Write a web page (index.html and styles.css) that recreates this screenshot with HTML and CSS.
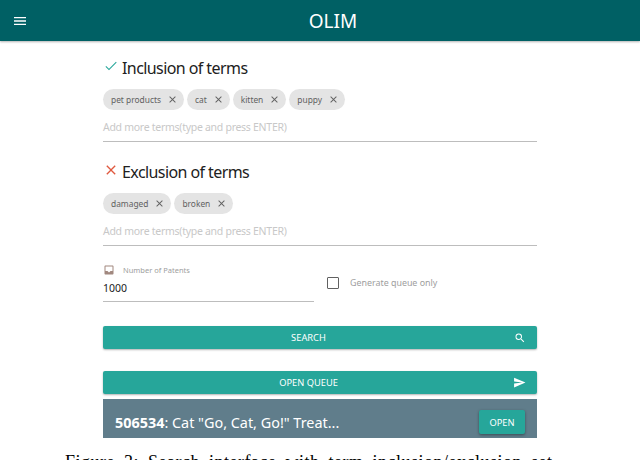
FILE: index.html
```html
<!DOCTYPE html>
<html lang="en">
<head>
<meta charset="utf-8">
<title>OLIM</title>
<link rel="stylesheet" href="styles.css">
</head>
<body>
<header class="appbar">
  <svg class="menu" viewBox="0 0 24 24"><path d="M3 18h18v-2H3v2zm0-5h18v-2H3v2zm0-7v2h18V6H3z"/></svg>
  <h1 class="brand">OLIM</h1>
</header>
<main class="content">
  <section class="terms">
    <h2 class="heading"><svg class="h-icon check" viewBox="0 0 24 24"><path d="M9 16.2 4.8 12l-1.1 1.1L9 18.4 20.5 6.9l-1.1-1.1z"/></svg>Inclusion of terms</h2>
    <div class="chips">
      <span class="chip">pet products<svg viewBox="0 0 24 24"><path d="M19 6.4 17.6 5 12 10.6 6.400 5 5 6.400 10.600 12 5 17.600 6.400 19 12 13.400 17.600 19 19 17.600 13.400 12z"/></svg></span>
      <span class="chip">cat<svg viewBox="0 0 24 24"><path d="M19 6.4 17.6 5 12 10.6 6.400 5 5 6.400 10.600 12 5 17.600 6.400 19 12 13.400 17.600 19 19 17.600 13.400 12z"/></svg></span>
      <span class="chip">kitten<svg viewBox="0 0 24 24"><path d="M19 6.4 17.6 5 12 10.6 6.400 5 5 6.400 10.600 12 5 17.600 6.400 19 12 13.400 17.600 19 19 17.600 13.400 12z"/></svg></span>
      <span class="chip">puppy<svg viewBox="0 0 24 24"><path d="M19 6.4 17.6 5 12 10.6 6.400 5 5 6.400 10.600 12 5 17.600 6.400 19 12 13.400 17.600 19 19 17.600 13.400 12z"/></svg></span>
    </div>
    <div class="add">Add more terms(type and press ENTER)</div>
  </section>
  <section class="terms">
    <h2 class="heading"><svg class="h-icon cross" viewBox="0 0 24 24"><path d="M19 6.400 17.600 5 12 10.600 6.400 5 5 6.400 10.600 12 5 17.600 6.400 19 12 13.400 17.600 19 19 17.600 13.400 12z"/></svg>Exclusion of terms</h2>
    <div class="chips">
      <span class="chip">damaged<svg viewBox="0 0 24 24"><path d="M19 6.4 17.6 5 12 10.6 6.400 5 5 6.400 10.600 12 5 17.600 6.400 19 12 13.400 17.600 19 19 17.600 13.400 12z"/></svg></span>
      <span class="chip">broken<svg viewBox="0 0 24 24"><path d="M19 6.4 17.6 5 12 10.6 6.400 5 5 6.400 10.600 12 5 17.600 6.400 19 12 13.400 17.600 19 19 17.600 13.400 12z"/></svg></span>
    </div>
    <div class="add">Add more terms(type and press ENTER)</div>
  </section>
  <section class="options">
    <div class="number">
      <div class="num-label"><svg viewBox="0 0 24 24"><path d="M19 3H5c-1.100 0-2 .9-2 2v14c0 1.100.9 2 2 2h14c1.100 0 2-.9 2-2V5c0-1.100-.9-2-2-2zm0 11h-4l-3 3-3-3H5V5h14v9z"/></svg><span>Number of Patents</span></div>
      <div class="num-value">1000</div>
    </div>
    <label class="check-row"><span class="box"></span><span>Generate queue only</span></label>
  </section>
  <div class="btn search"><span class="btn-label">SEARCH</span><svg viewBox="0 0 24 24"><path d="M15.500 14h-.79l-.28-.27A6.470 6.470 0 0 0 16 9.500 6.500 6.500 0 1 0 9.500 16c1.610 0 3.090-.59 4.230-1.570l.27.28v.79l5 4.990L20.490 19l-4.990-5zm-6 0C7.010 14 5 11.990 5 9.500S7.010 5 9.500 5 14 7.010 14 9.500 11.990 14 9.500 14z"/></svg></div>
  <div class="btn queue"><span class="btn-label">OPEN QUEUE</span><svg viewBox="0 0 24 24"><path d="M2 21l21-9L2 3v7l15 2-15 2z"/></svg></div>
  <div class="result">
    <div class="result-title"><b>506534</b>: Cat "Go, Cat, Go!" Treat...</div>
    <div class="open">OPEN</div>
  </div>
</main>
<p class="caption">Figure 3: Search interface with term inclusion/exclusion set</p>
</body>
</html>
```
FILE: styles.css
```css
html, body { margin: 0; padding: 0; }
body {
  width: 640px;
  height: 460px;
  overflow: hidden;
  background: #fff;
  font-family: "Noto Sans", "Open Sans", sans-serif;
  color: #212121;
}
.appbar {
  height: 41px;
  background: #006064;
  box-shadow: 0 1px 2px rgba(0,0,0,.3);
  display: flex;
  align-items: center;
}
.menu {
  margin-left: 12px;
  margin-right: -2px;
  width: 16px;
  height: 16px;
  fill: #fff;
  flex: none;
}
.brand {
  flex: 1;
  margin: 0;
  text-align: center;
  font-size: 19px;
  font-weight: 400;
  color: #fff;
}
.content {
  width: 434px;
  margin-left: 103px;
  display: flex;
  flex-direction: column;
}
.terms { display: flex; flex-direction: column; }
.terms:first-child { padding-top: 16px; }
.terms + .terms { margin-top: 19px; }
.heading {
  margin: 0;
  height: 22px;
  display: flex;
  align-items: center;
  font-size: 16px;
  font-weight: 400;
  letter-spacing: -.58px;
  color: #212121;
}
.h-icon { width: 16px; height: 16px; margin-right: 3px; margin-top: -4px; flex: none; }
.check { fill: #26a69a; }
.cross { fill: #e0593f; }
.chips { display: flex; gap: 3px; margin-top: 10px; }
.chip {
  height: 21px;
  border-radius: 11px;
  background: #e4e4e4;
  padding: 0 6px 0 8px;
  display: flex;
  align-items: center;
  font-size: 8.400px;
  color: #616161;
  gap: 6px;
}
.chip svg { width: 11px; height: 11px; fill: #616161; }
.add {
  margin-top: 8px;
  height: 23px;
  border-bottom: 1px solid #bdbdbd;
  font-size: 10.500px;
  letter-spacing: -.28px;
  line-height: 18px;
  color: #c8c8c8;
}
.options { display: flex; align-items: center; margin-top: 17px; }
.number { width: 211px; }
.num-label { display: flex; align-items: center; gap: 8px; font-size: 7.500px; color: #9e9e9e; height: 14px; }
.num-label svg { width: 12px; height: 12px; fill: #a1887f; }
.num-value {
  height: 24px;
  line-height: 23px;
  font-size: 10.500px;
  color: #212121;
  border-bottom: 1px solid #bdbdbd;
}
.check-row {
  display: flex;
  align-items: center;
  gap: 11px;
  margin-left: 13px;
  font-size: 8.900px;
  color: #9e9e9e;
}
.box { width: 10px; height: 10px; border: 1px solid #616161; border-radius: 1px; }
.btn {
  height: 23px;
  background: #26a69a;
  border-radius: 2px;
  box-shadow: 0 1px 2px rgba(0,0,0,.3);
  color: #fff;
  font-size: 9.300px;
  display: flex;
  align-items: center;
  padding-right: 11px;
}
.btn-label { flex: 1; text-align: center; }
.btn svg { fill: #fff; flex: none; }
.search { margin-top: 24px; }
.search svg { width: 12px; height: 12px; }
.queue { margin-top: 22px; }
.queue svg { width: 13px; height: 13px; margin-left: -1px; }
.result {
  margin-top: 5px;
  height: 39px;
  box-sizing: border-box;
  background: #607d8b;
  display: flex;
  align-items: center;
  justify-content: space-between;
  padding: 7px 12px 0;
  color: #fff;
}
.result-title { font-size: 14.400px; }
.open {
  width: 46px;
  height: 24px;
  background: #26a69a;
  border-radius: 2px;
  box-shadow: 0 1px 3px rgba(0,0,0,.4);
  font-size: 9.300px;
  display: flex;
  align-items: center;
  justify-content: center;
}
.caption {
  margin: 14px 0 0;
  padding-left: 65px;
  font-family: "Liberation Serif", serif;
  font-size: 18px;
  letter-spacing: .5px;
  word-spacing: 4px;
  color: #000;
  height: 20px;
  white-space: nowrap;
}
```
